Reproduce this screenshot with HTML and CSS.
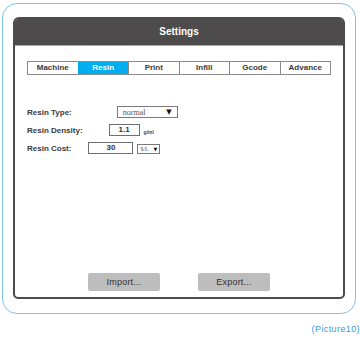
FILE: index.html
```html
<!DOCTYPE html>
<html lang="en">

<head>
    <meta charset="UTF-8">
    <title>Settings</title>
    <link rel="stylesheet" href="styles.css">
</head>

<body>

    <div class="frame">
        <div class="panel">
            <div class="panel-head">Settings</div>

            <div class="panel-body">
                <!-- Tabs -->
                <div class="tabs">
                    <div class="tab">Machine</div>
                    <div class="tab active">Resin</div>
                    <div class="tab">Print</div>
                    <div class="tab">Infill</div>
                    <div class="tab">Gcode</div>
                    <div class="tab">Advance</div>
                </div>

                <!-- Resin form -->
                <div class="form">
                    <div class="row">
                        <span class="label">Resin Type:</span>
                        <span class="select type-select">normal<span class="arrow">&#9660;</span></span>
                    </div>
                    <div class="row">
                        <span class="label">Resin Density:</span>
                        <span class="field density-field">1.1</span>
                        <span class="unit">g/ml</span>
                    </div>
                    <div class="row">
                        <span class="label">Resin Cost:</span>
                        <span class="field cost-field">30</span>
                        <span class="select mini-select">$/L<span class="arrow">&#9660;</span></span>
                    </div>
                </div>

                <div class="buttons">
                    <button class="btn">Import...</button>
                    <button class="btn">Export...</button>
                </div>
            </div>
        </div>
    </div>

    <div class="caption">(Picture10)</div>

</body>

</html>
```

FILE: styles.css
```css
* {
    padding: 0;
    margin: 0;
    box-sizing: border-box;
    font-family: "Liberation Sans", Arial, sans-serif;
}

body {
    background-color: #ffffff;
    width: 361px;
    height: 337px;
    overflow: hidden;
}

.frame {
    width: 354px;
    height: 311px;
    margin: 3px 0 0 2px;
    padding: 13px 0 0 10px;
    border: 1px solid #7cc4ea;
    border-radius: 15px;
}

.panel {
    width: 332px;
    height: 282px;
    border: 2px solid #4d4b4b;
    border-radius: 6px 6px 5px 5px;
    display: flex;
    flex-direction: column;
}

.panel-head {
    height: 27px;
    background-color: #4d4b4b;
    border-bottom: 1px solid #a3a3a3;
    color: #ffffff;
    font-size: 10px;
    font-weight: bold;
    text-align: center;
    line-height: 26px;
    border-radius: 3px 3px 0 0;
}

.panel-body {
    flex: 1;
    padding: 15px 12px 6px;
    display: flex;
    flex-direction: column;
}

.tabs {
    display: flex;
    height: 14px;
    border: 1px solid #8a8a8a;
}

.tab {
    flex: 1;
    font-size: 8px;
    font-weight: bold;
    color: #3a3a3a;
    text-align: center;
    line-height: 12px;
    border-left: 1px solid #8a8a8a;
}

.tab:first-child {
    border-left: none;
}

.tab.active {
    background-color: #00aeef;
    color: #ffffff;
    border-left-color: #00aeef;
}

.tab.active + .tab {
    border-left-color: #8a8a8a;
}

.form {
    margin-top: 31px;
    display: flex;
    flex-direction: column;
    gap: 6px;
}

.row {
    display: flex;
    align-items: center;
    height: 12px;
}

.label {
    font-size: 8px;
    font-weight: bold;
    color: #3a3a3a;
}

.select {
    display: flex;
    align-items: center;
    justify-content: space-between;
    border: 1px solid #7a7a7a;
    font-family: "Liberation Serif", serif;
    color: #555555;
}

.type-select {
    width: 61px;
    height: 12px;
    margin-left: 45px;
    padding: 0 5px;
    font-size: 8px;
}

.arrow {
    font-family: "DejaVu Sans", sans-serif;
    color: #111111;
}

.type-select .arrow {
    font-size: 7px;
}

.field {
    height: 12px;
    border: 1px solid #6f6f6f;
    font-size: 8px;
    font-weight: bold;
    color: #333333;
    text-align: center;
    line-height: 10px;
}

.density-field {
    width: 31px;
    margin-left: 26px;
}

.cost-field {
    width: 45px;
    margin-left: 17px;
}

.unit {
    margin: 3px 0 0 4px;
    font-size: 5px;
    font-weight: bold;
    color: #444444;
}

.mini-select {
    width: 23px;
    height: 10px;
    margin: 2px 0 0 4px;
    padding: 0 2px;
    font-size: 6px;
}

.mini-select .arrow {
    font-size: 5px;
}

.buttons {
    margin-top: auto;
    display: flex;
    justify-content: center;
    gap: 38px;
}

.btn {
    width: 72px;
    height: 18px;
    border: none;
    border-radius: 2px;
    background-color: #bdbdbd;
    color: #333333;
    font-size: 9px;
    letter-spacing: 0.2px;
}

.caption {
    margin-top: 10px;
    padding-right: 1px;
    text-align: right;
    font-size: 9px;
    line-height: 10px;
    letter-spacing: 0.4px;
    color: #3a9ad9;
}
```
